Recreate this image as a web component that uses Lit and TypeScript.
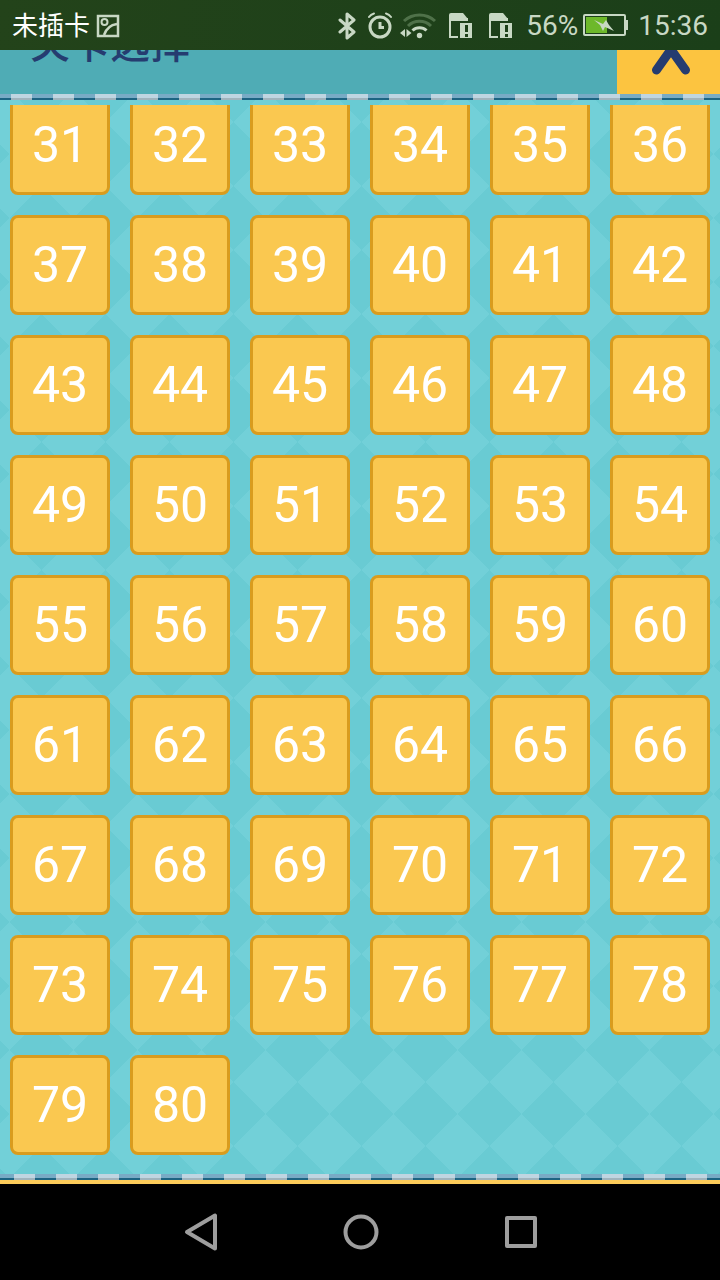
import { LitElement, html, css } from "lit";
import { customElement, state } from "lit/decorators.js";

@customElement("status-bar")
class StatusBar extends LitElement {
  static styles = css`
    :host {
      display: flex;
      align-items: center;
      justify-content: space-between;
      height: 50px;
      box-sizing: border-box;
      padding: 2px 12px 0;
      background: linear-gradient(100deg, #23431a, #1b3f19);
      color: #c8d8c4;
      font: 28px/32px Roboto, "Noto Sans CJK SC", sans-serif;
    }
    svg { display: block; fill: none; flex: none; }
    .side { display: flex; align-items: center; }
    .left { gap: 6px; }
    .carrier { color: #fff; font-size: 26px; }
    .icons { display: flex; align-items: center; gap: 8px; margin-right: 8px; }
    .battery { margin: 0 10px 2px 5px; }
  `;

  private sim() {
    return html`<svg width="32" height="28" viewBox="0 0 32 28" aria-hidden="true">
      <path d="M4 8v17h10" stroke="#c8d8c4" stroke-width="2" />
      <path d="M3 9V3q0-2 2-2h12l5 6v2z" fill="#c8d8c4" />
      <path d="M21 8v4" stroke="#c8d8c4" stroke-width="2" />
      <path d="M12 9h16v19H12z" fill="#1d4019" />
      <path d="M21 6v3" stroke="#c8d8c4" stroke-width="2" />
      <path d="M14 11h12v15H14z" fill="#c8d8c4" />
      <path d="M20.500 13v7M20.500 22v3" stroke="#1d4019" stroke-width="3" />
    </svg>`;
  }

  render() {
    return html`
      <div class="side left">
        <span class="carrier">未插卡</span>
        <svg width="24" height="24" viewBox="0 0 24 24" stroke="#c8d8c4" stroke-width="2.500" aria-hidden="true">
          <path d="M2 2h20v20H2z" />
          <circle cx="8.500" cy="8" r="3" stroke-width="2" />
          <path d="M8 21c2-6 6-10 13-11" />
        </svg>
      </div>
      <div class="side">
        <div class="icons">
          <svg width="20" height="28" viewBox="0 0 20 28" stroke="#c8d8c4" stroke-width="3" stroke-linejoin="round" stroke-linecap="round" aria-hidden="true">
            <path d="M2 8l14 12-7 6V2l7 6L2 20" />
          </svg>
          <svg width="26" height="28" viewBox="0 0 26 28" stroke="#c8d8c4" stroke-width="3" stroke-linecap="round" aria-hidden="true">
            <circle cx="14" cy="15" r="10" />
            <path d="M14 10v5.500h4" stroke-linecap="butt" />
            <path d="M3 5c1-1.500 3-3 5-3.500M25 5c-1-1.500-3-3-5-3.500" stroke-width="2" />
          </svg>
          <svg width="38" height="28" viewBox="0 0 38 28" aria-hidden="true">
            <path d="M4 9a23 23 0 0 1 31 0" stroke="#4f7149" stroke-width="3" />
            <path d="M8 14a16.500 16.500 0 0 1 23 0" stroke="#4f7149" stroke-width="3" />
            <path d="M12.500 18.500a10 10 0 0 1 14 0" stroke="#c8d8c4" stroke-width="3" />
            <circle cx="19.500" cy="23.500" r="2.700" fill="#c8d8c4" />
            <path d="M5 17v8l-5-4zM6.500 17v8l5-4z" fill="#c8d8c4" />
          </svg>
          ${this.sim()} ${this.sim()}
        </div>
        <span>56%</span>
        <svg class="battery" width="45" height="24" viewBox="0 0 45 24" aria-hidden="true">
          <rect x="1" y="2" width="41" height="20" rx="1" stroke="#c8d8c4" stroke-width="2" />
          <path d="M43 7h2v10h-2z" fill="#c8d8c4" />
          <path d="M3 4h21v16H3z" fill="#6db82a" />
          <path d="M11 7l9 4 3-4 3 5 5 6-9-4-2 4-3-6z" fill="#c8d8c4" />
        </svg>
        <span>15:36</span>
      </div>
    `;
  }
}

@customElement("nav-bar")
class NavBar extends LitElement {
  static styles = css`
    :host {
      display: flex;
      align-items: center;
      justify-content: center;
      gap: 112px;
      height: 96px;
      padding-left: 2px;
      background: #000;
    }
    button { padding: 0; border: 0; background: none; }
    svg { display: block; fill: none; stroke: #9e9e9e; stroke-width: 4; stroke-linejoin: round; }
  `;

  render() {
    return html`
      <button aria-label="返回"><svg width="48" height="48"><path d="M38 7.500v33L10 24z" /></svg></button>
      <button aria-label="主页"><svg width="48" height="48"><circle cx="24" cy="24" r="15.500" /></svg></button>
      <button aria-label="最近"><svg width="48" height="48"><path d="M10 10h28v28H10z" /></svg></button>
    `;
  }
}

@customElement("app-root")
class AppRoot extends LitElement {
  static styles = css`
    :host {
      display: flex;
      flex-direction: column;
      height: 100vh;
      overflow: hidden;
      font-family: Roboto, "Noto Sans CJK SC", sans-serif;
    }
    .game {
      flex: 1;
      min-height: 0;
      display: flex;
      flex-direction: column;
      background-color: #72d0d8;
      background-image:
        linear-gradient(45deg, #69cbd3 25%, transparent 25% 75%, #69cbd3 75%),
        linear-gradient(-45deg, #69cbd3 25%, transparent 25% 75%, #69cbd3 75%);
      background-size: 64px 64px;
      background-position: 41px 40px;
    }
    header {
      display: flex;
      align-items: flex-end;
      justify-content: space-between;
      height: 44px;
      overflow: hidden;
      background: #4facb5;
    }
    h1 {
      margin: 0 0 25px 30px;
      color: #253c70;
      font-size: 40px;
      font-weight: 500;
      line-height: 48px;
    }
    .close {
      width: 103px;
      height: 88px;
      padding: 0;
      border: 0;
      background: #fcc440;
    }
    .close svg { display: block; margin: 0 auto; }
    .dashes {
      flex: none;
      height: 6px;
      background:
        linear-gradient(transparent 4px, #1c6482 4px),
        #78abc5;
    }
    .dashes::after {
      content: "";
      display: block;
      height: 6px;
      background: linear-gradient(#bfd5e1 4px, #a0b4bd 4px);
      mask: linear-gradient(90deg, #000 21px, transparent 21px) 11px 0 / 42px 6px;
    }
    .bottom::after { mask-position: 14px 0; }
    .levels {
      flex: 1;
      min-height: 0;
      margin-top: 5px;
      overflow: hidden;
      display: flex;
      flex-direction: column;
      justify-content: flex-end;
    }
    .grid {
      display: grid;
      grid-template-columns: repeat(6, 1fr);
      gap: 20px;
      padding: 0 10px 19px;
    }
    .level {
      height: 100px;
      padding: 0;
      border: 3px solid #d99c1e;
      border-radius: 8px;
      background: #fac850;
      color: #fff;
      font: 50px/60px Roboto, sans-serif;
    }
    .edge { flex: none; height: 4px; background: #fccb59; }
  `;

  @state() private levels = Array.from({ length: 50 }, (_, i) => i + 31);

  render() {
    return html`
      <status-bar></status-bar>
      <main class="game">
        <header>
          <h1>关卡选择</h1>
          <button class="close" aria-label="关闭">
            <svg width="60" height="88" viewBox="0 0 60 88" fill="none" stroke="#253c70" stroke-width="9" stroke-linecap="round">
              <path d="M17.500 23l29 41M46.500 23l-29 41" />
            </svg>
          </button>
        </header>
        <div class="dashes"></div>
        <section class="levels">
          <div class="grid">
            ${this.levels.map((n) => html`<button class="level">${n}</button>`)}
          </div>
        </section>
        <div class="dashes bottom"></div>
        <div class="edge"></div>
      </main>
      <nav-bar></nav-bar>
    `;
  }
}
